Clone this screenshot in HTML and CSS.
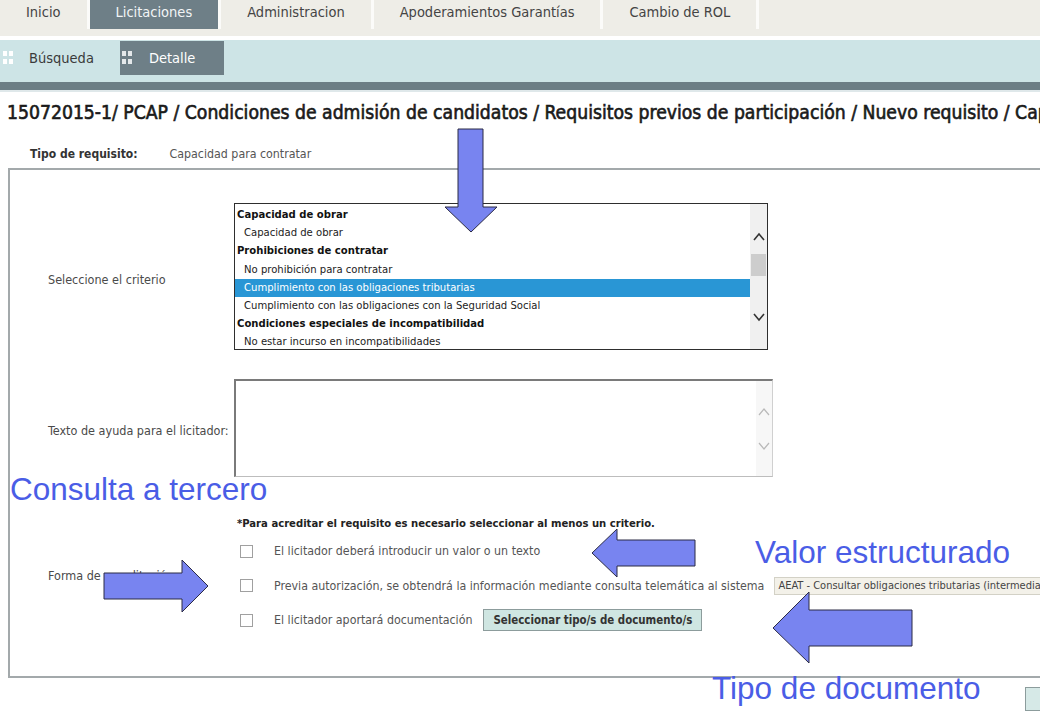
FILE: index.html
```html
<!DOCTYPE html>
<html lang="es">
  <head>
    <meta charset="UTF-8" />
    <title>Nuevo requisito</title>
    <link rel="stylesheet" href="styles.css">
  </head>
  <body>
    <!-- menu principal -->
    <div class="topnav">
      <a class="tab">Inicio</a>
      <a class="tab active">Licitaciones</a>
      <a class="tab">Administracion</a>
      <a class="tab">Apoderamientos Garantías</a>
      <a class="tab">Cambio de ROL</a>
    </div>
    <!-- submenu -->
    <div class="subnav">
      <a class="subtab">
        <svg class="grip" width="10" height="14" viewBox="0 0 10 14"><rect x="0" y="0" width="4" height="5"/><rect x="6" y="0" width="4" height="5"/><rect x="0" y="8" width="4" height="5"/><rect x="6" y="8" width="4" height="5"/></svg>
        Búsqueda
      </a>
      <a class="subtab active">
        <svg class="grip" width="10" height="14" viewBox="0 0 10 14"><rect x="0" y="0" width="4" height="5"/><rect x="6" y="0" width="4" height="5"/><rect x="0" y="8" width="4" height="5"/><rect x="6" y="8" width="4" height="5"/></svg>
        Detalle
      </a>
    </div>
    <div class="band"></div>

    <div class="crumb">15072015-1/ PCAP / Condiciones de admisión de candidatos / Requisitos previos de participación / Nuevo requisito / Capacidad para contratar</div>

    <div class="tipo">
      <b>Tipo de requisito:</b>
      <span>Capacidad para contratar</span>
    </div>

    <div class="panel">
      <div class="field-label">Seleccione el criterio</div>
      <div class="listbox">
        <div class="options">
          <div class="opt group">Capacidad de obrar</div>
          <div class="opt">Capacidad de obrar</div>
          <div class="opt group">Prohibiciones de contratar</div>
          <div class="opt">No prohibición para contratar</div>
          <div class="opt sel">Cumplimiento con las obligaciones tributarias</div>
          <div class="opt">Cumplimiento con las obligaciones con la Seguridad Social</div>
          <div class="opt group">Condiciones especiales de incompatibilidad</div>
          <div class="opt">No estar incurso en incompatibilidades</div>
        </div>
        <div class="vscroll">
          <svg class="chev up" width="12" height="12" viewBox="0 0 12 12"><polyline points="1,9 6,3 11,9"/></svg>
          <div class="thumb"></div>
          <svg class="chev down" width="12" height="12" viewBox="0 0 12 12"><polyline points="1,3 6,9 11,3"/></svg>
        </div>
      </div>

      <div class="field-label help-row">Texto de ayuda para el licitador:</div>
      <div class="helpbox help-row">
        <div class="vscroll light">
          <svg class="chev up" width="12" height="12" viewBox="0 0 12 12"><polyline points="1,9 6,3 11,9"/></svg>
          <svg class="chev down" width="12" height="12" viewBox="0 0 12 12"><polyline points="1,3 6,9 11,3"/></svg>
        </div>
      </div>

      <div class="field-label crit-row">Forma de acreditación</div>
      <div class="criteria crit-row">
        <div class="note">*Para acreditar el requisito es necesario seleccionar al menos un criterio.</div>
        <div class="check-row">
          <span class="box"></span>
          <span>El licitador deberá introducir un valor o un texto</span>
        </div>
        <div class="check-row">
          <span class="box"></span>
          <span>Previa autorización, se obtendrá la información mediante consulta telemática al sistema</span>
          <span class="sys-select">AEAT - Consultar obligaciones tributarias (intermediación)</span>
        </div>
        <div class="check-row">
          <span class="box"></span>
          <span>El licitador aportará documentación</span>
          <span class="btn">Seleccionar tipo/s de documento/s</span>
        </div>
      </div>
    </div>

    <div class="actions">
      <span class="btn small">&nbsp;</span>
    </div>

    <!-- anotaciones sobre la captura -->
    <div class="notes">
      <svg class="arrows" width="1040" height="720" viewBox="0 0 1040 720">
        <polygon points="458,129 483,129 483,207 497,207 471,232 445,207 458,207"/>
        <polygon points="104,573 182,573 182,560 208,586 182,612 182,599 104,599"/>
        <polygon points="695,540 617,540 617,529 592,553 617,577 617,566 695,566"/>
        <polygon points="912,610 809,610 809,592 773,628 809,663 809,646 912,646"/>
      </svg>
      <div class="note-text consulta">Consulta a tercero</div>
      <div class="note-text valor">Valor estructurado</div>
      <div class="note-text tipo-doc">Tipo de documento</div>
    </div>
  </body>
</html>
```

FILE: styles.css
```css
/* base */
body {
  margin: 0;
  width: 1040px;
  height: 720px;
  overflow: hidden;
  position: relative;
  background: #fff;
  color: #4a4a4a;
  font-family: "DejaVu Sans Condensed", "DejaVu Sans", sans-serif;
  font-stretch: condensed;
}

/* menu principal */
.topnav {
  display: flex;
  height: 36px;
  background: #eeede7;
  border-bottom: 4px solid #fff;
}
.tab {
  height: 29px;
  line-height: 25px;
  padding: 0 26px;
  font-size: 14.5px;
  color: #444;
  border-right: 3px solid #fbfbf9;
  white-space: nowrap;
}
.tab.active {
  background: #6e7f87;
  color: #f2f5f6;
}

/* submenu */
.subnav {
  display: flex;
  height: 42px;
  background: #cde4e6;
}
.subtab {
  display: flex;
  align-items: center;
  gap: 16px;
  height: 34px;
  margin-top: 1px;
  padding: 0 26px 0 3px;
  font-size: 14.5px;
  color: #3a3a3a;
}
.subtab.active {
  background: #6e7f87;
  color: #fff;
  padding: 0 29px 0 2px;
  gap: 17px;
}
.grip rect {
  fill: #fff;
}
.subtab.active .grip rect {
  fill: #e4e8ea;
}
.band {
  height: 8px;
  background: #6c7e85;
  border-bottom: 2px solid #dfe8ea;
}

/* cabecera */
.crumb {
  margin: 9px 0 0 7px;
  font-size: 19.2px;
  line-height: 24px;
  color: #1a1a1a;
  -webkit-text-stroke: 0.6px #1a1a1a;
  white-space: nowrap;
}
.tipo {
  display: flex;
  margin: 21px 0 0 30px;
  font-size: 12px;
  line-height: 16px;
}
.tipo b {
  color: #333;
}
.tipo span {
  margin-left: 32px;
  color: #555;
  font-size: 12.3px;
}

/* formulario */
.panel {
  margin: 6px 0 0 8px;
  width: 1100px;
  border: 2px solid #a3a9ab;
  padding: 33px 0 38px 38px;
  display: grid;
  grid-template-columns: 186px 1fr;
  align-items: center;
  font-size: 12.3px;
}
.field-label {
  padding-top: 5px;
  color: #4a4a4a;
  font-size: 12.5px;
  white-space: nowrap;
}
.help-row {
  margin-top: 29px;
}
.crit-row {
  margin-top: 37px;
}
.field-label.crit-row {
  padding-top: 0;
}

.listbox {
  width: 534px;
  height: 147px;
  box-sizing: border-box;
  border: 1px solid #2e2e2e;
  display: flex;
  font-size: 11.2px;
}
.options {
  flex: 1;
  padding-top: 2px;
  overflow: hidden;
}
.opt {
  height: 18.2px;
  line-height: 18.2px;
  padding-left: 9px;
  color: #222;
  white-space: nowrap;
}
.opt.group {
  padding-left: 2px;
  font-weight: bold;
  color: #111;
}
.opt.sel {
  background: #2996d5;
  color: #fff;
}

.vscroll {
  width: 17px;
  background: #f0f0f0;
  display: flex;
  flex-direction: column;
  align-items: center;
  padding-top: 27px;
}
.chev polyline {
  fill: none;
  stroke: #333;
  stroke-width: 1.6;
}
.thumb {
  width: 15px;
  height: 22px;
  margin-top: 11px;
  background: #cdcdcd;
}
.vscroll .down {
  margin-top: 35px;
}

.helpbox {
  width: 539px;
  height: 98px;
  box-sizing: border-box;
  border-style: solid;
  border-width: 2px 1px 1px 2px;
  border-color: #7a7a7a #d0d0d0 #bdbdbd #7a7a7a;
  display: flex;
  justify-content: flex-end;
}
.vscroll.light {
  width: 16px;
  background: #f7f7f7;
  padding-top: 25px;
}
.vscroll.light .chev polyline {
  stroke: #b9b9b9;
  stroke-width: 1.2;
}
.vscroll.light .down {
  margin-top: 22px;
}

.criteria {
  color: #555;
}
.note {
  padding: 2px 0 2px 3px;
  line-height: 16px;
  font-size: 11.2px;
  font-weight: bold;
  color: #222;
  white-space: nowrap;
}
.check-row {
  display: flex;
  align-items: center;
  height: 34.5px;
  padding-left: 6px;
  white-space: nowrap;
}
.box {
  width: 13px;
  height: 13px;
  box-sizing: border-box;
  border: 1px solid #a0a0a0;
  margin-right: 21px;
  background: #fff;
}
.sys-select {
  margin-left: 10px;
  height: 18px;
  line-height: 16px;
  box-sizing: border-box;
  padding: 0 3px;
  background: #f3f1e9;
  border: 1px solid #d3d1c6;
  font-size: 11px;
  color: #444;
}
.btn {
  margin-left: 11px;
  height: 22px;
  line-height: 20px;
  box-sizing: border-box;
  padding: 0 9px;
  background: #cfe6e2;
  border: 1px solid #8c9c9c;
  font-size: 11.4px;
  font-weight: bold;
  color: #333;
}

.actions {
  display: flex;
  padding: 9px 0 0 1025px;
}
.btn.small {
  margin-left: 0;
  width: 40px;
  height: 24px;
  background: #d6e9e7;
}

/* anotaciones */
.notes {
  position: absolute;
  left: 0;
  top: 0;
  width: 1040px;
  height: 720px;
  pointer-events: none;
}
.arrows polygon {
  fill: #7884f0;
  stroke: #2b2b45;
  stroke-width: 1;
}
.note-text {
  position: absolute;
  font-family: "Liberation Sans", Arial, sans-serif;
  font-size: 31.5px;
  line-height: 1;
  color: #4a5de6;
  white-space: nowrap;
}
.consulta {
  left: 10px;
  top: 474px;
}
.valor {
  left: 755px;
  top: 537px;
}
.tipo-doc {
  left: 712px;
  top: 673px;
}
```
